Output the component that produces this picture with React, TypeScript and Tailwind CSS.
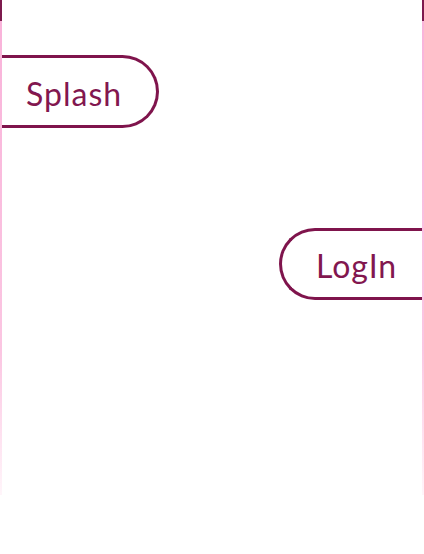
export default function App() {
  return (
    <div className="w-[424px] h-[554px] bg-white flex overflow-hidden font-['Lato',sans-serif]">
      {/* left rail */}
      <div className="w-[2px] h-[495px] flex flex-col">
        <div className="h-[21px] bg-[#7d1a4e]" />
        <div className="flex-1 bg-gradient-to-b from-[#f9b3da] via-[#fbc6e2] via-70% to-[#fff5fa]" />
      </div>

      {/* screen */}
      <div className="flex-1 flex flex-col pt-[55px]">
        <button className="w-[157px] h-[73px] rounded-r-full border-[3px] border-l-0 border-[#7f144c] text-[#82174f] text-[32px] tracking-[1px] flex items-center pl-[24px] pt-[4px]">
          Splash
        </button>
        <button className="self-end mt-[100px] w-[143px] h-[72px] rounded-l-full border-[3px] border-r-0 border-[#7f144c] text-[#82174f] text-[32px] tracking-[1px] flex items-center pl-[34px] pt-[4px]">
          LogIn
        </button>
      </div>

      {/* right rail */}
      <div className="w-[2px] h-[495px] flex flex-col">
        <div className="h-[21px] bg-[#7d1a4e]" />
        <div className="flex-1 bg-gradient-to-b from-[#f9b3da] via-[#fbc6e2] via-70% to-[#fff5fa]" />
      </div>
    </div>
  );
}
